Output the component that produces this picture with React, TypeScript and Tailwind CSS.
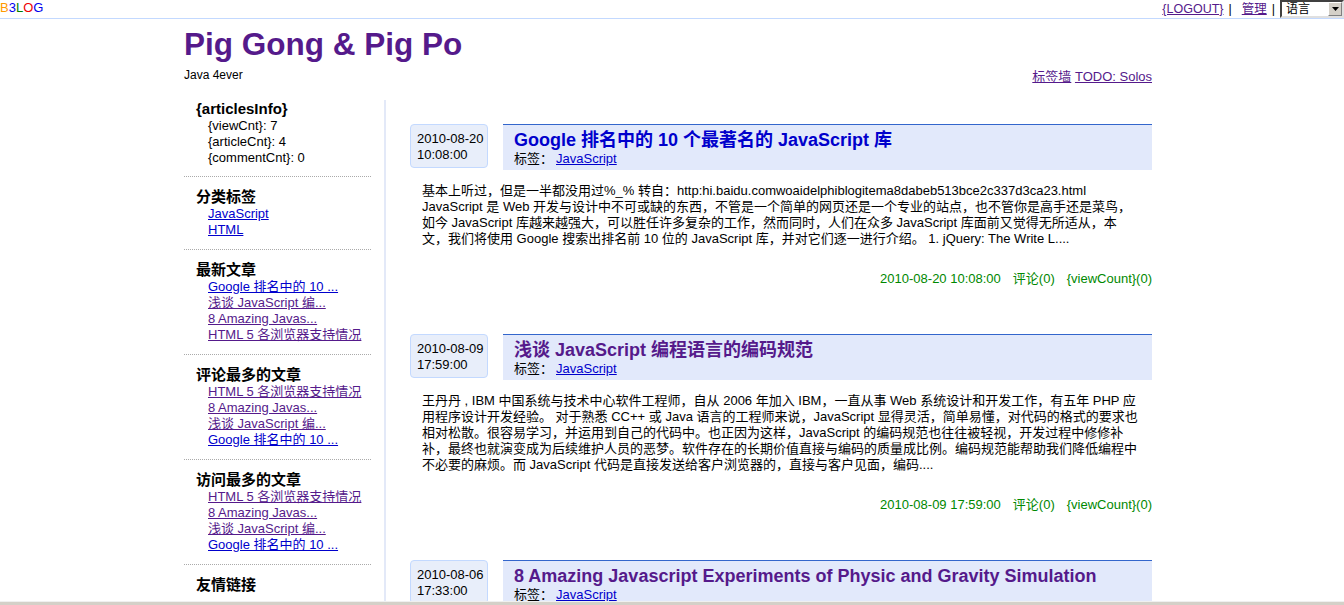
import React from "react";

const FONT = "font-['Liberation_Sans','Noto_Sans_CJK_SC',sans-serif]";
const BLUE = "text-[#0000cc]";
const PURPLE = "text-[#551a8b]";

type LinkItem = { label: string; visited?: boolean };

const sections: { title: string; links: LinkItem[] }[] = [
  {
    title: "分类标签",
    links: [{ label: "JavaScript" }, { label: "HTML" }],
  },
  {
    title: "最新文章",
    links: [
      { label: "Google 排名中的 10 ..." },
      { label: "浅谈 JavaScript 编...", visited: true },
      { label: "8 Amazing Javas...", visited: true },
      { label: "HTML 5 各浏览器支持情况", visited: true },
    ],
  },
  {
    title: "评论最多的文章",
    links: [
      { label: "HTML 5 各浏览器支持情况", visited: true },
      { label: "8 Amazing Javas...", visited: true },
      { label: "浅谈 JavaScript 编...", visited: true },
      { label: "Google 排名中的 10 ..." },
    ],
  },
  {
    title: "访问最多的文章",
    links: [
      { label: "HTML 5 各浏览器支持情况", visited: true },
      { label: "8 Amazing Javas...", visited: true },
      { label: "浅谈 JavaScript 编...", visited: true },
      { label: "Google 排名中的 10 ..." },
    ],
  },
];

// line breaks kept as in the original summary
const articles = [
  {
    date: "2010-08-20",
    time: "10:08:00",
    title: "Google 排名中的 10 个最著名的 JavaScript 库",
    visited: false,
    lines: [
      "基本上听过，但是一半都没用过%_% 转自：http:hi.baidu.comwoaidelphiblogitema8dabeb513bce2c337d3ca23.html",
      "JavaScript 是 Web 开发与设计中不可或缺的东西，不管是一个简单的网页还是一个专业的站点，也不管你是高手还是菜鸟，",
      "如今 JavaScript 库越来越强大，可以胜任许多复杂的工作，然而同时，人们在众多 JavaScript 库面前又觉得无所适从，本",
      "文，我们将使用 Google 搜索出排名前 10 位的 JavaScript 库，并对它们逐一进行介绍。 1. jQuery: The Write L....",
    ],
  },
  {
    date: "2010-08-09",
    time: "17:59:00",
    title: "浅谈 JavaScript 编程语言的编码规范",
    visited: true,
    lines: [
      "王丹丹 , IBM 中国系统与技术中心软件工程师，自从 2006 年加入 IBM，一直从事 Web 系统设计和开发工作，有五年 PHP 应",
      "用程序设计开发经验。 对于熟悉 CC++ 或 Java 语言的工程师来说，JavaScript 显得灵活，简单易懂，对代码的格式的要求也",
      "相对松散。很容易学习，并运用到自己的代码中。也正因为这样，JavaScript 的编码规范也往往被轻视，开发过程中修修补",
      "补，最终也就演变成为后续维护人员的恶梦。软件存在的长期价值直接与编码的质量成比例。编码规范能帮助我们降低编程中",
      "不必要的麻烦。而 JavaScript 代码是直接发送给客户浏览器的，直接与客户见面，编码....",
    ],
  },
  {
    date: "2010-08-06",
    time: "17:33:00",
    title: "8 Amazing Javascript Experiments of Physic and Gravity Simulation",
    visited: true,
    lines: [] as string[],
  },
];

const TopBar = () => (
  <div className="flex h-[19px] items-start justify-between border-b border-[#c3d9ff] text-[13px] leading-[15px]">
    <div>
      <span className="text-[#ff9900]">B</span>
      <span className="text-[#0000ee]">3</span>
      <span className="text-[#008000]">L</span>
      <span className="text-[#ee0000]">O</span>
      <span className="text-[#0000ee]">G</span>
    </div>
    <div className="flex items-start text-[12.5px] leading-[18px]">
      <a className={`${PURPLE} underline`}>{"{LOGOUT}"}</a>
      <span className="px-[5px]">|</span>
      <a className={`${PURPLE} ml-[5px] underline`}>管理</a>
      <span className="px-[5px]">|</span>
      <div className="flex h-[18px] w-[64px] border-2 border-t-[#404040] border-l-[#404040] border-r-[#e0e0e0] border-b-[#e0e0e0] bg-white">
        <span className="flex-1 pl-[4px] text-[12px] leading-[14px]">语言</span>
        <span className="flex w-[14px] items-center justify-center border border-t-white border-l-white border-r-[#808080] border-b-[#808080] bg-[#d4d0c8]">
          <svg width="7" height="4" viewBox="0 0 7 4">
            <path d="M0 0h7L3.5 4z" fill="#000" />
          </svg>
        </span>
      </div>
    </div>
  </div>
);

const Sidebar = () => (
  <aside className="w-[202px] shrink-0 border-r-2 border-[#e3e9f8] pr-[13px]">
    <div className="border-b border-dotted border-[#aaaaaa] pb-[10px] pl-[12px]">
      <h3 className="text-[15px] font-bold leading-[18px]">{"{articlesInfo}"}</h3>
      <div className="pl-[12px] text-[13px] leading-[16px]">
        <div>{"{viewCnt}"}: 7</div>
        <div>{"{articleCnt}"}: 4</div>
        <div>{"{commentCnt}"}: 0</div>
      </div>
    </div>
    {sections.map((s) => (
      <div
        key={s.title}
        className="border-b border-dotted border-[#aaaaaa] pt-[11px] pb-[11px] pl-[12px]"
      >
        <h3 className="text-[15px] font-bold leading-[18px]">{s.title}</h3>
        <ul className="pl-[12px] text-[13px] leading-[16px]">
          {s.links.map((l, i) => (
            <li key={i}>
              <a className={`${l.visited ? PURPLE : BLUE} underline`}>{l.label}</a>
            </li>
          ))}
        </ul>
      </div>
    ))}
    <div className="pt-[11px] pl-[12px]">
      <h3 className="text-[15px] font-bold leading-[18px]">友情链接</h3>
    </div>
  </aside>
);

const Article = ({ a }: { a: (typeof articles)[number] }) => (
  <div className="mb-[47px]">
    <div className="flex items-start">
      <div className="h-[44px] w-[78px] shrink-0 rounded-[4px] border border-[#c3d9ff] bg-[#e8eefa] pt-[6px] pl-[6px] text-[13px] leading-[16px]">
        <div>{a.date}</div>
        <div>{a.time}</div>
      </div>
      <div className="ml-[15px] h-[46px] flex-1 border-t border-[#3366cc] bg-[#e2e9fb] px-[11px] pt-[4px]">
        <h2
          className={`${a.visited ? PURPLE : BLUE} text-[18px] font-bold leading-[22px]`}
        >
          {a.title}
        </h2>
        <div className="text-[13px] leading-[16px]">
          标签：
          <a className={`${BLUE} ml-[3px] underline`}>JavaScript</a>
        </div>
      </div>
    </div>
    {a.lines.length > 0 && (
      <>
        <p className="mt-[13px] px-[12px] text-[13px] leading-[16px] whitespace-nowrap">
          {a.lines.map((line, i) => (
            <React.Fragment key={i}>
              {line}
              {i < a.lines.length - 1 && <br />}
            </React.Fragment>
          ))}
        </p>
        <div className="mt-[24px] flex justify-end gap-3 text-[13px] leading-[16px] text-[#008800]">
          <span>
            {a.date} {a.time}
          </span>
          <span>评论(0)</span>
          <span>{"{viewCount}"}(0)</span>
        </div>
      </>
    )}
  </div>
);

export default function App() {
  return (
    <div className={`${FONT} min-h-[605px] bg-white text-black`}>
      <TopBar />
      <div className="mx-auto w-[976px] pr-[8px]">
        <header className="pt-[9px]">
          <h1 className={`${PURPLE} text-[31.5px] font-bold leading-[32px]`}>
            Pig Gong &amp; Pig Po
          </h1>
          <div className="mt-[8px] flex items-end justify-between text-[12px] leading-[14px]">
            <span>Java 4ever</span>
            <span className="translate-y-[2px] text-[13px]">
              <a className={`${PURPLE} underline`}>标签墙</a>{" "}
              <a className={`${PURPLE} underline`}>TODO: Solos</a>
            </span>
          </div>
        </header>
        <div className="mt-[18px] flex">
          <Sidebar />
          <main className="flex-1 pt-[24px] pl-[24px]">
            {articles.map((a) => (
              <Article key={a.title} a={a} />
            ))}
          </main>
        </div>
      </div>
      <div className="fixed right-0 bottom-0 left-0 h-[4px] border-t border-[#f0f0f0] bg-[#d4d0c8]" />
    </div>
  );
}
